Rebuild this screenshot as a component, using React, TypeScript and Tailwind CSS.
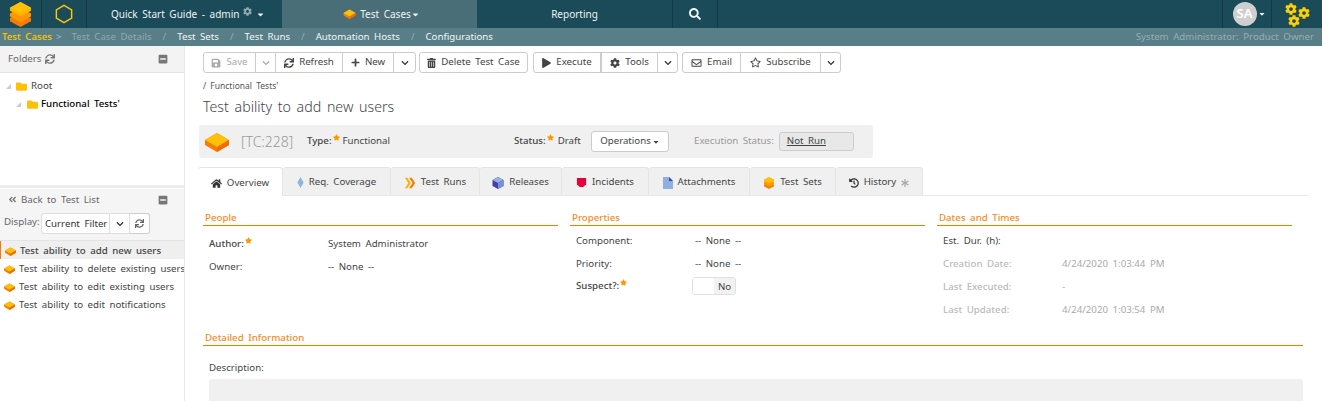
import React from 'react';
import {
  FaAngleDoubleLeft, FaAsterisk, FaCaretDown, FaChevronDown, FaCog, FaFolder, FaHistory, FaHome,
  FaMinusSquare, FaPlay, FaPlus, FaRegEnvelope, FaRegStar, FaSave, FaSearch, FaStar, FaSync, FaTrashAlt,
} from 'react-icons/fa';

const Flat = ({ className = '' }: { className?: string }) => (
  <svg viewBox="0 0 26 20" className={className}>
    <path d="M13 1 25 8v5l-12 7L1 13V8z" fill="#f57c00" />
    <path d="M13 1 25 8l-12 7L1 8z" fill="#ffc107" />
    <path d="M13 15 25 8v5l-12 7z" fill="#ef6c00" />
  </svg>
);

const Stack = ({ className = '' }: { className?: string }) => (
  <svg viewBox="0 0 24 26" className={className}>
    <path d="M12 11 23 17v3l-11 6-11-6v-3z" fill="#f57c00" />
    <path d="M12 6 23 12v3l-11 6-11-6v-3z" fill="#ff9800" />
    <path d="M12 0 23 6v3l-11 6L1 9V6z" fill="#ffb300" />
    <path d="M12 0 23 6l-11 6L1 6z" fill="#ffc107" />
  </svg>
);

const Gears = () => (
  <div className="relative h-[25px] w-[25px]">
    <FaCog className="absolute left-0 top-[1px] h-[12px] w-[12px] text-[#ffd000]" />
    <FaCog className="absolute left-[13px] top-[5px] h-[12px] w-[12px] text-[#ffd000]" />
    <FaCog className="absolute left-[3px] top-[13px] h-[12px] w-[12px] text-[#ffd000]" />
  </div>
);

const Sep = () => <span className="px-[11px] text-[#8fadb3]">/</span>;

const Crumb = ({ children }: { children: React.ReactNode }) => <span className="text-[#f2f5f5]">{children}</span>;

const Req = () => <FaStar className="mb-[8px] ml-[1px] h-[7px] w-[7px] shrink-0 text-[#ff9800]" />;

const TopBar = () => (
  <div className="flex h-[28px] bg-[#1b4b59] text-[10px] text-[#eef3f3]">
    <div className="flex w-[42px] items-center justify-center border-r border-[#123a46]">
      <Stack className="h-[25px] w-[23px]" />
    </div>
    <div className="flex w-[45px] items-center justify-center border-r border-[#123a46]">
      <svg viewBox="0 0 20 22" className="h-[20px] w-[18px]">
        <path d="M10 1.5 18.5 6.5v9L10 20.5 1.5 15.5v-9z" fill="none" stroke="#ffc800" strokeWidth="1.6" />
      </svg>
    </div>
    <div className="flex w-[195px] items-center pl-[24px]">
      <span>Quick Start Guide - admin</span>
      <FaCog className="mb-[5px] ml-[4px] h-[9px] w-[9px] text-[#8fa9af]" />
      <FaCaretDown className="ml-[4px] h-[9px] w-[9px]" />
    </div>
    <div className="flex w-[195px] items-center justify-center bg-[#4a6e78] pl-[4px]">
      <Flat className="mr-[4px] h-[10px] w-[13px]" />
      <span>Test Cases</span>
      <FaCaretDown className="h-[9px] w-[9px]" />
    </div>
    <div className="flex w-[195px] items-center justify-center">Reporting</div>
    <div className="flex w-[46px] items-center justify-center border-x border-[#123a46]">
      <FaSearch className="h-[12px] w-[12px]" />
    </div>
    <div className="flex-1" />
    <div className="flex w-[50px] items-center justify-center border-x border-[#123a46] pl-[4px]">
      <span className="flex h-[24px] w-[24px] items-center justify-center rounded-full bg-[#cfcfcf] text-[13px] font-semibold text-white">SA</span>
      <FaCaretDown className="ml-[1px] h-[8px] w-[8px]" />
    </div>
    <div className="flex w-[50px] items-center justify-center pl-[1px]">
      <Gears />
    </div>
  </div>
);

const SubBar = () => (
  <div className="flex h-[18px] items-center justify-between bg-[#587f87] pr-[8px] pt-[1px] text-[9.7px]">
    <div className="flex items-center pl-[2px]">
      <span className="font-medium text-[#ffc800]">Test Cases</span>
      <span className="ml-[4px] mr-[10px] text-[#a5bcc1]">&gt;</span>
      <span className="text-[#8fa8ad]">Test Case Details</span>
      <Sep />
      <Crumb>Test Sets</Crumb>
      <Sep />
      <Crumb>Test Runs</Crumb>
      <Sep />
      <Crumb>Automation Hosts</Crumb>
      <Sep />
      <Crumb>Configurations</Crumb>
    </div>
    <span className="text-[#93aeb3]">System Administrator: Product Owner</span>
  </div>
);

const listItems = ['Test ability to add new users', 'Test ability to delete existing users', 'Test ability to edit existing users', 'Test ability to edit notifications'];

const Sidebar = () => (
  <aside className="w-[185px] shrink-0 border-r border-[#e8e8e8] text-[9.7px] text-[#444]">
    <div className="flex h-[27px] items-center justify-between border-b border-[#e4e4e4] bg-[#f3f3f3] pl-[8px] pr-[16px] text-[#666]">
      <span className="flex items-center">Folders<FaSync className="ml-[4px] h-[10px] w-[10px] text-[#777]" /></span>
      <FaMinusSquare className="h-[10px] w-[10px] text-[#777]" />
    </div>
    <div className="h-[115px] border-b-[3px] border-[#ececec] pt-[4px]">
      <div className="flex h-[18px] items-center pl-[6px]">
        <span className="mr-[5px] h-0 w-0 border-b-[5px] border-l-[5px] border-b-[#ccc] border-l-transparent" />
        <FaFolder className="mr-[4px] h-[11px] w-[11px] text-[#ffc107]" />
        <span>Root</span>
      </div>
      <div className="flex h-[18px] items-center pl-[16px]">
        <span className="mr-[6px] h-0 w-0 border-b-[5px] border-l-[5px] border-b-[#ccc] border-l-transparent" />
        <FaFolder className="mr-[3px] h-[11px] w-[11px] text-[#ffc107]" />
        <span className="font-medium text-black">Functional Tests'</span>
      </div>
    </div>
    <div className="mt-[1px] h-[52px] border-b border-[#e4e4e4] bg-[#f5f5f5]">
      <div className="flex h-[24px] items-center justify-between pb-[2px] pl-[8px] pr-[16px] text-[#666]">
        <span className="flex items-center"><FaAngleDoubleLeft className="mr-[4px] h-[9px] w-[9px] text-[#777]" />Back to Test List</span>
        <FaMinusSquare className="h-[10px] w-[10px] text-[#777]" />
      </div>
      <div className="flex items-center pl-[4px] text-[#666]">
        <span className="w-[37px] pb-[3px]">Display:</span>
        <div className="flex h-[21px] items-stretch">
          <span className="flex w-[69px] items-center rounded-l-[3px] border border-[#ddd] bg-white pl-[3px] pt-[2px] text-[#333]">Current Filter</span>
          <span className="flex w-[20px] items-center justify-center border-y border-r border-[#ddd] bg-white"><FaChevronDown className="h-[8px] w-[8px] text-[#333]" /></span>
          <span className="flex w-[20px] items-center justify-center rounded-r-[3px] border-y border-r border-[#ccc] bg-white"><FaSync className="h-[9px] w-[9px] text-[#666]" /></span>
        </div>
      </div>
    </div>
    <div>
      {listItems.map((t, i) => (
        <div key={t} className={`flex h-[18px] items-center overflow-hidden whitespace-nowrap pl-[3px] pt-[2px] ${i === 0 ? 'border-l border-[#f57c00] bg-[#efefef] pl-[2px] font-medium' : ''}`}>
          <Flat className="mr-[3px] h-[9px] w-[13px] shrink-0" />
          <span>{t}</span>
        </div>
      ))}
    </div>
  </aside>
);

const Btn = ({ icon, label, muted, last, heavy, w }: { icon?: React.ReactNode; label?: string; muted?: boolean; last?: boolean; heavy?: boolean; w: string }) => (
  <span className={`flex h-full items-center justify-center gap-[5px] ${w} ${last ? '' : heavy ? 'border-r-2 border-[#ccc]' : 'border-r border-[#ccc]'} ${muted ? 'text-[#aaa]' : 'text-[#444]'}`}>
    {icon}
    {label}
  </span>
);

const Group = ({ children }: { children: React.ReactNode }) => (
  <div className="flex h-[21px] items-center rounded-[3px] border border-[#ccc] bg-white">{children}</div>
);

const chevron = <FaChevronDown className="h-[8px] w-[8px]" />;

const Toolbar = () => (
  <div className="flex text-[9.7px]">
    <Group>
      <Btn muted w="w-[52px]" icon={<FaSave className="h-[10px] w-[10px]" />} label="Save" />
      <Btn muted w="w-[20px]" icon={chevron} />
      <Btn w="w-[67px]" icon={<FaSync className="h-[10px] w-[10px]" />} label="Refresh" />
      <Btn w="w-[51px]" icon={<FaPlus className="h-[9px] w-[9px]" />} label="New" />
      <span className="flex h-full w-[21px] items-center justify-center text-[#333]">{chevron}</span>
    </Group>
    <div className="ml-[3px]">
      <Group><Btn last w="w-[107px]" icon={<FaTrashAlt className="h-[10px] w-[9px]" />} label="Delete Test Case" /></Group>
    </div>
    <div className="ml-[5px]">
      <Group>
        <Btn heavy w="w-[68px]" icon={<FaPlay className="h-[10px] w-[9px]" />} label="Execute" />
        <Btn w="w-[56px]" icon={<FaCog className="h-[10px] w-[10px]" />} label="Tools" />
        <span className="flex h-full w-[19px] items-center justify-center text-[#333]">{chevron}</span>
      </Group>
    </div>
    <div className="ml-[4px]">
      <Group>
        <Btn w="w-[58px]" icon={<FaRegEnvelope className="h-[10px] w-[11px]" />} label="Email" />
        <Btn w="w-[80px]" icon={<FaRegStar className="h-[11px] w-[11px]" />} label="Subscribe" />
        <span className="flex h-full w-[19px] items-center justify-center text-[#333]">{chevron}</span>
      </Group>
    </div>
  </div>
);

const tabIcon: Record<string, React.ReactNode> = {
  home: <FaHome className="h-[11px] w-[11px] text-[#333]" />,
  req: (
    <svg viewBox="0 0 8 14" className="h-[11px] w-[7px]"><path d="M4 0 8 7l-4 7-4-7z" fill="#8fb4dd" /></svg>
  ),
  runs: (
    <svg viewBox="0 0 14 14" className="h-[12px] w-[12px]">
      <path d="M1 1h3l4 6-4 6H1l4-6z" fill="#ffb300" /><path d="M6 1h3l4 6-4 6H6l4-6z" fill="#f57c00" />
    </svg>
  ),
  rel: (
    <svg viewBox="0 0 12 12" className="h-[12px] w-[12px]">
      <path d="M6 0 11.5 3v6L6 12 .5 9V3z" fill="#4a3fa8" /><path d="M6 0 11.5 3 6 6 .5 3z" fill="#8fb4dd" /><path d="M6 6 11.5 3v6L6 12z" fill="#7b8fd6" />
    </svg>
  ),
  inc: (
    <svg viewBox="0 0 12 12" className="h-[11px] w-[11px]"><path d="M1 1h10v7l-3 3H4L1 8z" fill="#e6003c" /></svg>
  ),
  att: (
    <svg viewBox="0 0 10 12" className="h-[12px] w-[10px]"><path d="M0 0h6l4 4v8H0z" fill="#8fb0de" /><path d="M6 0l4 4H6z" fill="#4a3fa8" /></svg>
  ),
  sets: <Stack className="h-[12px] w-[12px]" />,
  hist: <FaHistory className="h-[10px] w-[10px] text-[#333]" />,
};

const tabs = [
  { label: 'Overview', icon: 'home', w: 'w-[85px]' },
  { label: 'Req. Coverage', icon: 'req', w: 'w-[108px]' },
  { label: 'Test Runs', icon: 'runs', w: 'w-[89px]' },
  { label: 'Releases', icon: 'rel', w: 'w-[82px]' },
  { label: 'Incidents', icon: 'inc', w: 'w-[87px]' },
  { label: 'Attachments', icon: 'att', w: 'w-[101px]' },
  { label: 'Test Sets', icon: 'sets', w: 'w-[86px]' },
  { label: 'History', icon: 'hist', w: 'w-[87px]' },
];

const Tabs = () => (
  <div className="-ml-[1px] mr-[13px] mt-[9px] flex h-[29px] border-b border-[#e8e8e8] text-[9.7px] text-[#444]">
    {tabs.map((t, i) => (
      <div key={t.label} className={`flex ${t.w} items-center justify-center gap-[5px] rounded-t-[3px] border-r border-t border-[#e4e4e4] pt-[2px] ${i === 0 ? 'h-[29px] bg-white' : 'bg-[#f0f0f0]'}`}>
        {tabIcon[t.icon]}
        <span>{t.label}</span>
        {t.label === 'History' && <FaAsterisk className="h-[8px] w-[8px] text-[#aaa]" />}
      </div>
    ))}
  </div>
);

const Section = ({ title }: { title: string }) => (
  <div className="flex h-[18px] items-end border-b border-[#f57c00] pl-[2px] text-[9.7px] font-medium leading-[14px] text-[#f98a1e]">{title}</div>
);

const Row = ({ label, value, req, faded, h = 'h-[23px]' }: { label: string; value?: React.ReactNode; req?: boolean; faded?: boolean; h?: string }) => (
  <div className={`flex ${h} items-center pl-[6px] pt-[2px] text-[9.7px]`}>
    <span className={`flex w-[119px] items-center ${faded ? 'font-medium text-[#bbb]' : 'text-[#444]'} ${req ? 'font-medium' : ''}`}>
      {label}
      {req && <Req />}
    </span>
    <span className={faded ? 'text-[#aaa]' : 'text-[#444]'}>{value}</span>
  </div>
);

const Main = () => (
  <main className="min-w-0 flex-1 overflow-hidden pl-[14px] pt-[6px]">
    <div className="pl-[4px]"><Toolbar /></div>
    <div className="mt-[7px] pl-[4px] text-[8.5px] leading-[12px] text-[#555]">/ Functional Tests'</div>
    <h1 className="mt-[5px] pl-[4px] text-[14.2px] font-light leading-[20px] text-[#444]">Test ability to add new users</h1>
    <div className="mt-[8px] flex h-[33px] w-[674px] items-center rounded-[3px] bg-[#f0f0f0] text-[9.7px] text-[#444]">
      <Flat className="ml-[5px] h-[20px] w-[26px]" />
      <span className="ml-[11px] w-[66px] text-[14px] font-light text-[#999]">[TC:228]</span>
      <span className="flex w-[207px] items-center font-medium"><span>Type:</span><Req /><span className="ml-[3px] font-normal">Functional</span></span>
      <span className="flex w-[77px] items-center font-medium"><span>Status:</span><Req /><span className="ml-[4px] font-normal">Draft</span></span>
      <span className="flex h-[21px] w-[78px] items-center justify-center rounded-[3px] border border-[#ccc] bg-white">Operations<FaCaretDown className="ml-[1px] h-[8px] w-[8px]" /></span>
      <span className="ml-[25px] text-[#999]">Execution Status:</span>
      <span className="ml-[5px] flex h-[19px] w-[75px] items-center rounded-[3px] border border-[#ccc] bg-[#e8e8e8] pl-[7px] underline">Not Run</span>
    </div>
    <Tabs />
    <div className="mr-[30px] mt-[12px] grid grid-cols-3 gap-x-[12px] pl-[4px]">
      <div>
        <Section title="People" />
        <div className="pt-[6px]">
          <Row label="Author:" req value="System Administrator" />
          <Row label="Owner:" value="-- None --" />
        </div>
      </div>
      <div>
        <Section title="Properties" />
        <div className="pt-[3px]">
          <Row label="Component:" value="-- None --" />
          <Row label="Priority:" value="-- None --" />
          <Row label="Suspect?:" req h="h-[21px]" value={
            <span className="-ml-[3px] -mt-[2px] flex h-[18px] w-[44px] overflow-hidden rounded-[3px] border border-[#e0e0e0]">
              <span className="w-[21px] bg-white" />
              <span className="flex-1 bg-[#f2f2f2] pl-[4px] leading-[17px]">No</span>
            </span>
          } />
        </div>
      </div>
      <div>
        <Section title="Dates and Times" />
        <div className="pt-[3px]">
          <Row label="Est. Dur. (h):" />
          <Row label="Creation Date:" faded value="4/24/2020 1:03:44 PM" />
          <Row label="Last Executed:" faded value="-" />
          <Row label="Last Updated:" faded value="4/24/2020 1:03:54 PM" />
        </div>
      </div>
    </div>
    <div className="mr-[19px] mt-[7px] pl-[4px]">
      <Section title="Detailed Information" />
      <div className="mt-[15px] pl-[6px] text-[9.7px] leading-[14px] text-[#444]">Description:</div>
      <div className="ml-[6px] mt-[4px] h-[40px] rounded-t-[3px] bg-[#f0f0f0]" />
    </div>
  </main>
);

export default function App() {
  return (
    <div className="h-[401px] w-[1322px] overflow-hidden bg-white font-['Noto_Sans',sans-serif] [word-spacing:2px]">
      <TopBar />
      <SubBar />
      <div className="flex">
        <Sidebar />
        <Main />
      </div>
    </div>
  );
}
